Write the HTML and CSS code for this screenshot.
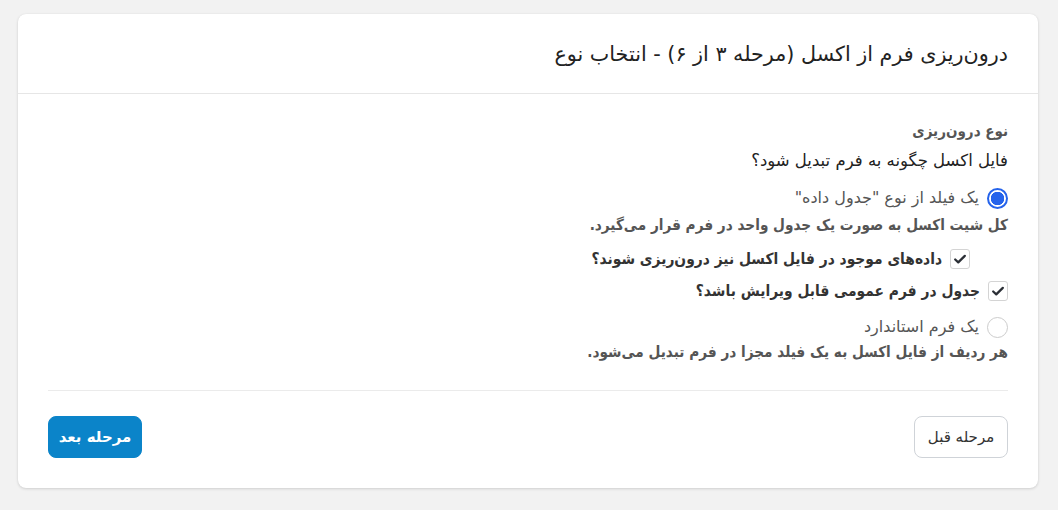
FILE: index.html
```html
<!DOCTYPE html>
<html lang="fa" dir="rtl">
<head>
<meta charset="utf-8">
<link rel="stylesheet" href="styles.css">
</head>
<body>
<div class="card">
  <div class="card-header">
    <h1 class="title">درون‌ریزی فرم از اکسل (مرحله ۳ از ۶) - انتخاب نوع</h1>
  </div>
  <div class="card-body">
    <div class="field-label">نوع درون‌ریزی</div>
    <div class="question">فایل اکسل چگونه به فرم تبدیل شود؟</div>

    <div class="option">
      <span class="radio checked"></span>
      <span class="option-text">یک فیلد از نوع "جدول داده"</span>
    </div>
    <div class="desc">کل شیت اکسل به صورت یک جدول واحد در فرم قرار می‌گیرد.</div>

    <div class="check-row nested">
      <span class="checkbox"><svg viewBox="0 0 16 16" width="14" height="14"><path d="M2.5 8.6 L6 11.8 L13.5 4.4" fill="none" stroke="#2b2f36" stroke-width="2.6" stroke-linecap="round" stroke-linejoin="round"/></svg></span>
      <span class="check-text">داده‌های موجود در فایل اکسل نیز درون‌ریزی شوند؟</span>
    </div>
    <div class="check-row">
      <span class="checkbox"><svg viewBox="0 0 16 16" width="14" height="14"><path d="M2.5 8.6 L6 11.8 L13.5 4.4" fill="none" stroke="#2b2f36" stroke-width="2.6" stroke-linecap="round" stroke-linejoin="round"/></svg></span>
      <span class="check-text">جدول در فرم عمومی قابل ویرایش باشد؟</span>
    </div>

    <div class="option second">
      <span class="radio"></span>
      <span class="option-text">یک فرم استاندارد</span>
    </div>
    <div class="desc last">هر ردیف از فایل اکسل به یک فیلد مجزا در فرم تبدیل می‌شود.</div>

    <div class="divider"></div>

    <div class="actions">
      <button class="btn btn-default">مرحله قبل</button>
      <button class="btn btn-primary">مرحله بعد</button>
    </div>
  </div>
</div>
</body>
</html>
```

FILE: styles.css
```css
* { box-sizing: border-box; }
html, body { margin: 0; }
body {
  background: #f2f2f2;
  padding: 14px 20px 22px 18px;
  font-family: "DejaVu Sans", "Noto Sans", sans-serif;
  color: #222;
}
.card {
  background: #fff;
  border-radius: 8px;
  box-shadow: 0 1px 3px rgba(0,0,0,0.14), 0 0 1px rgba(0,0,0,0.08);
  height: 474px;
}
.card-header {
  height: 80px;
  border-bottom: 1px solid #e6e6e6;
  display: flex;
  align-items: center;
  padding: 0 30px;
}
.title {
  margin: 0;
  font-size: 20.7px;
  font-weight: normal;
  color: #222;
}
.card-body {
  padding: 26px 30px 0 30px;
}
.field-label {
  font-family: "DejaVu Sans Condensed", "DejaVu Sans", sans-serif;
  font-size: 15px;
  font-weight: bold;
  color: #555;
  line-height: 22px;
}
.question {
  font-size: 16.5px;
  color: #222;
  line-height: 22px;
  margin-top: 8px;
}
.option {
  display: flex;
  align-items: center;
  gap: 8px;
  margin-top: 15px;
}
.option.second { margin-top: 14px; }
.radio {
  width: 21px;
  height: 21px;
  border-radius: 50%;
  border: 1px solid #ccc;
  flex: none;
  background: #fff;
}
.radio.checked {
  border: 2px solid #2563eb;
  background: radial-gradient(circle, #2563eb 0 6.5px, #fff 7px);
}
.option-text {
  font-size: 16px;
  color: #555;
  line-height: 22px;
}
.desc {
  font-family: "DejaVu Sans Condensed", "DejaVu Sans", sans-serif;
  font-size: 15.2px;
  font-weight: bold;
  color: #555;
  line-height: 22px;
  margin-top: 5px;
}
.desc.last { margin-top: 3px; }
.check-row {
  display: flex;
  align-items: center;
  gap: 8px;
  margin-top: 10px;
}
.check-row.nested { padding-right: 38px; margin-top: 12px; }
.checkbox {
  width: 20px;
  height: 20px;
  border: 1px solid #d4d4d4;
  border-radius: 3px;
  display: flex;
  align-items: center;
  justify-content: center;
  flex: none;
  background: #fff;
}
.check-text {
  font-family: "DejaVu Sans Condensed", "DejaVu Sans", sans-serif;
  font-size: 15.4px;
  font-weight: bold;
  color: #333;
  line-height: 22px;
}
.divider {
  height: 1px;
  background: #ebebeb;
  margin-top: 27px;
}
.actions {
  display: flex;
  justify-content: space-between;
  margin-top: 25px;
}
.btn {
  height: 42px;
  width: 94px;
  border-radius: 8px;
  font-family: inherit;
  font-size: 15px;
  cursor: pointer;
}
.btn-default {
  background: #fff;
  border: 1px solid #cfd3d8;
  color: #333;
}
.btn-primary {
  background: #0b84c9;
  border: 1px solid #0b84c9;
  color: #fff;
  font-weight: bold;
}
```
